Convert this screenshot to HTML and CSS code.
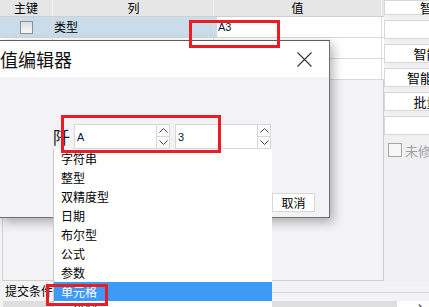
FILE: index.html
```html
<!DOCTYPE html>
<html lang="zh">
<head>
  <meta charset="UTF-8">
  <title>值编辑器</title>
<link rel="stylesheet" href="styles.css">
</head>
<body>
<div class="app">
  <div class="top">
    <div class="main">
      <div class="grid">
        <div class="row head">
          <div class="c c-key">主键</div>
          <div class="c c-col">列</div>
          <div class="c c-val">值</div>
        </div>
        <div class="row sel">
          <div class="c c-key"><span class="chk"></span></div>
          <div class="c c-col">类型</div>
          <div class="c c-val"><span class="editor">A3</span></div>
        </div>
        <div class="row">
          <div class="c c-key"><span class="chk"></span></div>
          <div class="c c-col">名称</div>
          <div class="c c-val"></div>
        </div>
        <div class="row">
          <div class="c c-key"><span class="chk"></span></div>
          <div class="c c-col">备注</div>
          <div class="c c-val"></div>
        </div>
      </div>
      <div class="grid-rest"></div>
    </div>
    <div class="side">
      <div class="btn btn-first">智能</div>
      <div class="btn"></div>
      <div class="btn">智能化</div>
      <div class="btn">智能匹配</div>
      <div class="btn">批量改</div>
      <div class="btn"></div>
      <label class="side-check"><span class="box"></span>未修改值</label>
    </div>
  </div>
  <div class="cond">
    <span class="cond-label">提交条件</span>
    <span class="cond-line"></span>
  </div>
  <div class="bottom">
    <div class="bar"></div>
    <div class="bar-white">主键</div>
  </div>
</div>

<!-- value editor dialog -->
<div class="dialog">
  <div class="dlg-title">
    <span>值编辑器</span>
    <svg class="close" width="15" height="15" viewBox="0 0 15 15"><path d="M0.5 0.5 L14.5 14.5 M14.5 0.5 L0.5 14.5" stroke="#333" stroke-width="1.1" fill="none"/></svg>
  </div>
  <div class="dlg-body">
    <div class="field-row">
      <span class="field-label">阡</span>
      <div class="spin">
        <div class="spin-text">A</div>
        <div class="spin-btns">
          <span class="spin-up"><svg width="9" height="5" viewBox="0 0 9 5"><polyline points="0.5,4.5 4.5,0.5 8.5,4.5" stroke="#444" fill="none"/></svg></span>
          <span class="spin-down"><svg width="9" height="5" viewBox="0 0 9 5"><polyline points="0.5,0.5 4.5,4.5 8.5,0.5" stroke="#444" fill="none"/></svg></span>
        </div>
      </div>
      <div class="spin">
        <div class="spin-text">3</div>
        <div class="spin-btns">
          <span class="spin-up"><svg width="9" height="5" viewBox="0 0 9 5"><polyline points="0.5,4.5 4.5,0.5 8.5,4.5" stroke="#444" fill="none"/></svg></span>
          <span class="spin-down"><svg width="9" height="5" viewBox="0 0 9 5"><polyline points="0.5,0.5 4.5,4.5 8.5,0.5" stroke="#444" fill="none"/></svg></span>
        </div>
      </div>
    </div>
    <div class="dlg-foot">
      <div class="dlg-btn">取消</div>
    </div>
  </div>
</div>

<ul class="dropdown">
  <li>字符串</li>
  <li>整型</li>
  <li>双精度型</li>
  <li>日期</li>
  <li>布尔型</li>
  <li>公式</li>
  <li>参数</li>
  <li class="active">单元格</li>
  <li>二进制</li>
</ul>

<!-- annotation boxes -->
<div class="mark mark-cell"></div>
<div class="mark mark-spin"></div>
<div class="mark mark-item"></div>
</body>
</html>
```

FILE: styles.css
```css
body {
  margin: 0;
  width: 429px;
  height: 307px;
  overflow: hidden;
  position: relative;
  background: #f3f3f6;
  font-family: "Noto Sans CJK SC", "Liberation Sans", sans-serif;
  font-size: 12px;
  color: #000;
}

.app {
  display: flex;
  flex-direction: column;
  height: 307px;
}

.top {
  display: flex;
  height: 281px;
}

.main {
  width: 384px;
  display: flex;
  flex-direction: column;
}

.row {
  display: flex;
  height: 20px;
  border-bottom: 1px solid #d9d9d9;
  background: #fff;
}

.row.head {
  height: 16px;
  background: #e6e6e6;
  border-bottom: 1px solid #d0d0d0;
}

.c {
  display: flex;
  align-items: center;
  box-sizing: border-box;
  border-right: 1px solid #dcdcdc;
  line-height: 14px;
}

.head .c {
  justify-content: center;
  border-right: 1px solid #f4f4f4;
}

.c-key {
  width: 53px;
  justify-content: center;
}

.c-col {
  width: 161px;
  padding-left: 1px;
}

.c-val {
  width: 168px;
}

.row.sel .c-key,
.row.sel .c-col,
.row.sel .c-val {
  background: #c9dcea;
}

.editor {
  align-self: stretch;
  flex: 1;
  margin-left: 3px;
  background: #fff;
  padding: 3px 0 0 1px;
  font-family: "Liberation Sans", sans-serif;
  font-size: 11px;
  color: #0a1a40;
}

.chk {
  width: 13px;
  height: 13px;
  box-sizing: border-box;
  border: 1px solid #8f8f8f;
  background: linear-gradient(#dcdcdc, #f9f9f9);
}

.grid-rest {
  flex: 1;
  margin-left: 2px;
  border-left: 1px solid #cfcfcf;
  border-right: 1px solid #cfcfcf;
  border-bottom: 1px solid #cfcfcf;
  background: #f3f3f6;
}

.side {
  width: 45px;
  overflow: hidden;
  display: flex;
  flex-direction: column;
  gap: 5px;
  background: #f0f0f2;
}

.btn {
  flex: none;
  width: 98px;
  height: 19px;
  box-sizing: border-box;
  background: #fff;
  border: 1px solid #d6d6d6;
  text-align: center;
  font-size: 13px;
  line-height: 17px;
}

.btn-first {
  height: 15px;
  line-height: 13px;
}

.side-check {
  display: flex;
  align-items: center;
  gap: 3px;
  margin-top: 1px;
  padding-left: 4px;
  height: 18px;
  white-space: nowrap;
  font-size: 13px;
  color: #a0a0a0;
}

.side-check .box {
  width: 12px;
  height: 12px;
  flex: none;
  border: 1px solid #a6a6a6;
  background: #f6f6f6;
}

.cond {
  display: flex;
  align-items: center;
  height: 20px;
}

.cond-label {
  padding-left: 5px;
  line-height: 14px;
}

.cond-line {
  flex: 1;
  height: 1px;
  margin: 2px 0 0 2px;
  background: #dadada;
}

.bottom {
  display: flex;
  height: 6px;
}

.bar {
  width: 394px;
  margin-left: 3px;
  background: #dedede;
}

.bar-white {
  flex: 1;
  background: #fff;
  padding: 3px 0 0 17px;
  line-height: 12px;
  overflow: hidden;
}

/* dialog */
.dialog {
  position: absolute;
  left: 0;
  top: 40px;
  width: 330px;
  box-sizing: border-box;
  border-top: 1px solid #5c5c5c;
  border-right: 1px solid #707070;
  border-bottom: 1px solid #707070;
  box-shadow: 3px 4px 10px rgba(0, 0, 0, 0.3);
}

.dlg-title {
  height: 36px;
  background: #fff;
  display: flex;
  align-items: center;
  justify-content: space-between;
  padding-right: 17px;
  font-size: 18px;
  line-height: 20px;
  color: #111;
}

.close {
  display: block;
  margin-top: 1px;
}

.dlg-body {
  height: 140px;
  box-sizing: border-box;
  background: #f3f3f6;
  padding-top: 47px;
}

.field-row {
  display: flex;
  align-items: center;
  height: 25px;
  padding-left: 53px;
}

.field-label {
  width: 21px;
  font-size: 17px;
  line-height: 18px;
  color: #222;
}

.spin {
  display: flex;
  width: 96px;
  height: 25px;
  margin-right: 5px;
}

.spin-text {
  flex: 1;
  background: #fff;
  border: 1px solid #d8d8d8;
  padding: 6px 0 0 2px;
  font-family: "Liberation Sans", sans-serif;
  font-size: 11px;
  line-height: 12px;
  color: #0a1a40;
}

.spin-btns {
  width: 13px;
  display: flex;
  flex-direction: column;
}

.spin-btns span {
  flex: 1;
  display: flex;
  align-items: center;
  justify-content: center;
  background: #fbfbfb;
  border: 1px solid #d8d8d8;
  border-left: none;
}

.spin-btns .spin-down {
  border-top: none;
}

.dlg-foot {
  display: flex;
  justify-content: flex-end;
  margin-top: 44px;
  padding-right: 14px;
}

.dlg-btn {
  width: 43px;
  height: 19px;
  box-sizing: border-box;
  background: #fff;
  border: 1px solid #d6d6d6;
  text-align: center;
  line-height: 17px;
}

/* dropdown list */
.dropdown {
  position: absolute;
  left: 53px;
  top: 149px;
  width: 218px;
  height: 170px;
  margin: 0;
  padding: 0;
  list-style: none;
  background: #fff;
  border-left: 1px solid #c8c8c8;
}

.dropdown li {
  height: 19px;
  line-height: 19px;
  padding-left: 7px;
}

.dropdown li.active {
  background: #3d9af6;
  color: #fff;
}

/* red annotation boxes */
.mark {
  position: absolute;
  box-sizing: border-box;
  border: 3px solid #ec1c24;
}

.mark-cell {
  left: 189px;
  top: 20px;
  width: 91px;
  height: 28px;
}

.mark-spin {
  left: 61px;
  top: 115px;
  width: 160px;
  height: 38px;
}

.mark-item {
  left: 46px;
  top: 284px;
  width: 62px;
  height: 22px;
}
```
